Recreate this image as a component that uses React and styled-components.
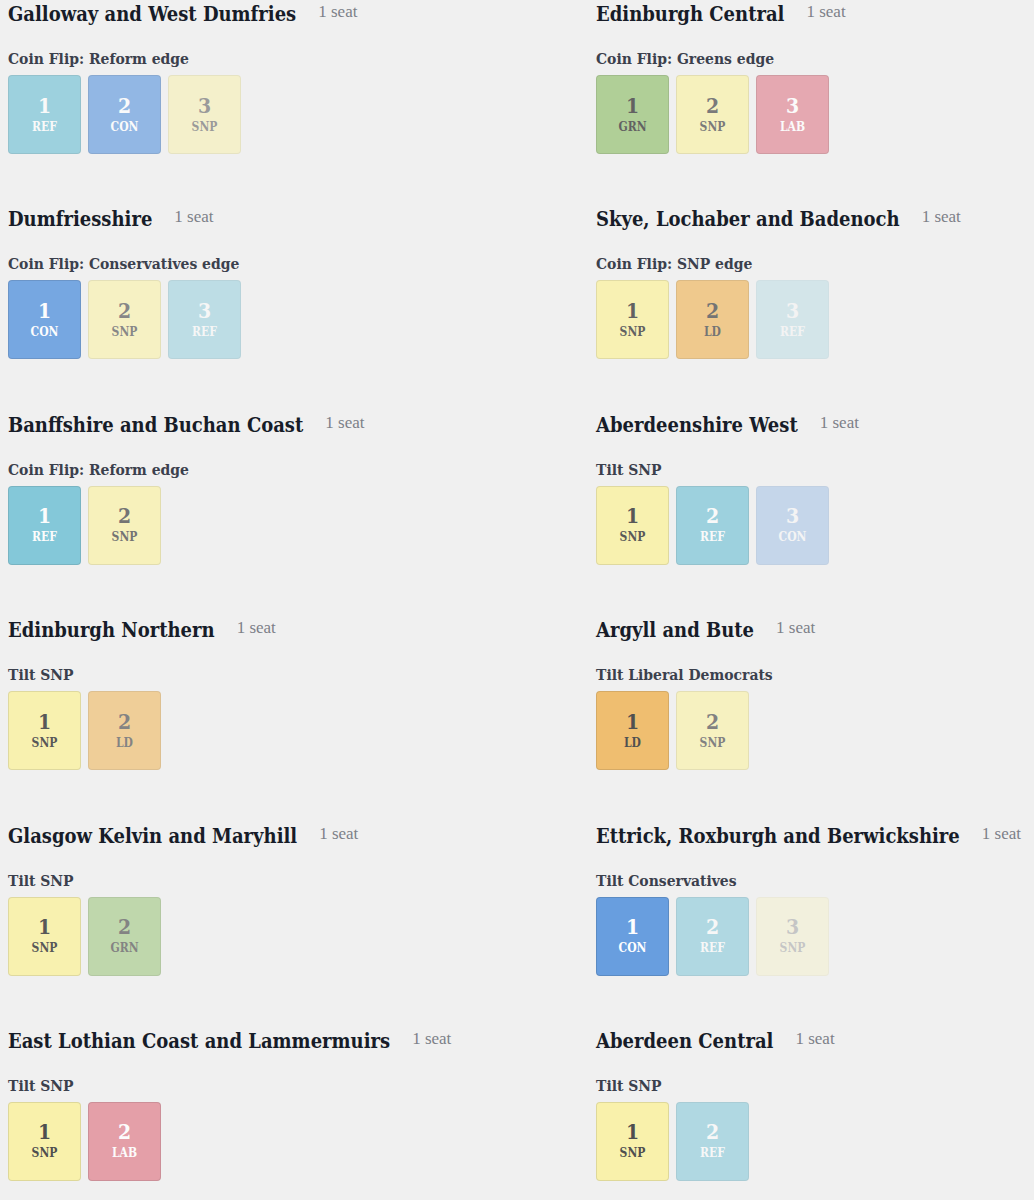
import React from "react";
import styled, { createGlobalStyle } from "styled-components";

const GlobalStyle = createGlobalStyle`
  body {
    margin: 0;
    background: #f0f0f0;
    font-family: "DejaVu Serif", "Liberation Serif", serif;
    font-stretch: condensed;
  }
`;

const Page = styled.div`
  padding: 0 8px;
  display: grid;
  grid-template-columns: 588px 1fr;
  row-gap: 51.4px;
`;

const Seat = styled.section`
  display: flex;
  flex-direction: column;
`;

const Header = styled.div`
  display: flex;
  align-items: center;
  height: 28px;
  gap: 22px;
`;

const Name = styled.h2`
  margin: 0;
  font-size: 20px;
  font-weight: 700;
  color: #171c28;
  white-space: nowrap;
`;

const Count = styled.span`
  font-family: "Liberation Serif", serif;
  font-stretch: normal;
  font-size: 17px;
  color: #7d8088;
  white-space: nowrap;
  margin-top: -4px;
`;

const Rating = styled.div`
  margin-top: 19px;
  font-size: 15.5px;
  font-weight: 700;
  line-height: 23px;
  color: #3b404d;
`;

const Tiles = styled.div`
  display: flex;
  gap: 7px;
  margin-top: 5px;
`;

const Tile = styled.div`
  box-sizing: border-box;
  width: 73px;
  height: 79px;
  border-radius: 4px;
  border: 1px solid rgba(0, 0, 0, 0.12);
  background: ${(p) => p.$bg};
  color: ${(p) => p.$fg};
  display: flex;
  flex-direction: column;
  align-items: center;
  justify-content: center;
  font-weight: 700;
`;

const Rank = styled.span`
  font-size: 21px;
  line-height: 22px;
`;

const Party = styled.span`
  font-size: 12px;
  line-height: 16px;
  margin-top: 2px;
`;

const parties = {
  SNP: { bg: "#fbf29f", fg: "#333333" },
  CON: { bg: "#669ddf", fg: "#ffffff" },
  REF: { bg: "#72c2d5", fg: "#ffffff" },
  LD: { bg: "#efb85f", fg: "#3b3b3b" },
  GRN: { bg: "#9fc77f", fg: "#3b3b3b" },
  LAB: { bg: "#e2919c", fg: "#ffffff" },
};

const seats = [
  {
    name: "Galloway and West Dumfries",
    rating: "Coin Flip: Reform edge",
    tiles: [["REF", 0.65], ["CON", 0.68], ["SNP", 0.45]],
  },
  {
    name: "Edinburgh Central",
    rating: "Coin Flip: Greens edge",
    tiles: [["GRN", 0.78], ["SNP", 0.62], ["LAB", 0.75]],
  },
  {
    name: "Dumfriesshire",
    rating: "Coin Flip: Conservatives edge",
    tiles: [["CON", 0.88], ["SNP", 0.55], ["REF", 0.4]],
  },
  {
    name: "Skye, Lochaber and Badenoch",
    rating: "Coin Flip: SNP edge",
    tiles: [["SNP", 0.75], ["LD", 0.68], ["REF", 0.22]],
  },
  {
    name: "Banffshire and Buchan Coast",
    rating: "Coin Flip: Reform edge",
    tiles: [["REF", 0.85], ["SNP", 0.65]],
  },
  {
    name: "Aberdeenshire West",
    rating: "Tilt SNP",
    tiles: [["SNP", 0.8], ["REF", 0.65], ["CON", 0.3]],
  },
  {
    name: "Edinburgh Northern",
    rating: "Tilt SNP",
    tiles: [["SNP", 0.8], ["LD", 0.6]],
  },
  {
    name: "Argyll and Bute",
    rating: "Tilt Liberal Democrats",
    tiles: [["LD", 0.88], ["SNP", 0.58]],
  },
  {
    name: "Glasgow Kelvin and Maryhill",
    rating: "Tilt SNP",
    tiles: [["SNP", 0.8], ["GRN", 0.6]],
  },
  {
    name: "Ettrick, Roxburgh and Berwickshire",
    rating: "Tilt Conservatives",
    tiles: [["CON", 0.98], ["REF", 0.5], ["SNP", 0.22]],
  },
  {
    name: "East Lothian Coast and Lammermuirs",
    rating: "Tilt SNP",
    tiles: [["SNP", 0.85], ["LAB", 0.85]],
  },
  {
    name: "Aberdeen Central",
    rating: "Tilt SNP",
    tiles: [["SNP", 0.85], ["REF", 0.5]],
  },
];

function SeatCard({ seat }) {
  return (
    <Seat>
      <Header>
        <Name>{seat.name}</Name>
        <Count>1 seat</Count>
      </Header>
      <Rating>{seat.rating}</Rating>
      <Tiles>
        {seat.tiles.map(([party, strength], i) => (
          <Tile
            key={party}
            $bg={parties[party].bg}
            $fg={parties[party].fg}
            style={{ opacity: strength }}
          >
            <Rank>{i + 1}</Rank>
            <Party>{party}</Party>
          </Tile>
        ))}
      </Tiles>
    </Seat>
  );
}

export default function App() {
  return (
    <>
      <GlobalStyle />
      <Page>
        {seats.map((s) => (
          <SeatCard key={s.name} seat={s} />
        ))}
      </Page>
    </>
  );
}
